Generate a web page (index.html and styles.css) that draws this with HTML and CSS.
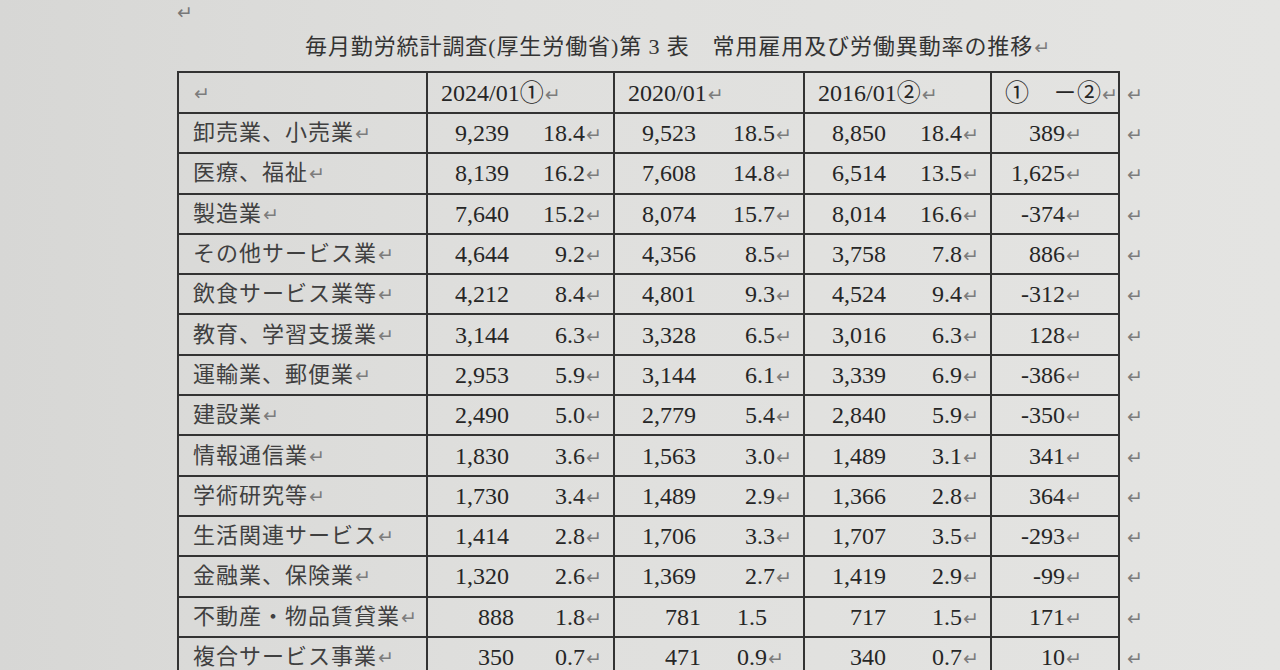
FILE: index.html
```html
<!DOCTYPE html>
<html lang="ja">
<head>
<meta charset="utf-8">
<title>毎月勤労統計調査 第3表</title>
<link rel="stylesheet" href="styles.css">
</head>
<body>
<div class="page">
  <div class="topmark">↵</div>
  <h1 class="title">毎月勤労統計調査(厚生労働省)第 3 表　常用雇用及び労働異動率の推移<i class="rm">↵</i></h1>
  <table class="stats">
    <colgroup>
      <col class="c-lab"><col class="c-24"><col class="c-20"><col class="c-16"><col class="c-diff"><col class="c-eol">
    </colgroup>
    <tr class="head">
      <td class="lab"><i class="rm">↵</i></td>
      <td class="hd">2024/01①<i class="rm">↵</i></td>
      <td class="hd">2020/01<i class="rm">↵</i></td>
      <td class="hd">2016/01②<i class="rm">↵</i></td>
      <td class="hd">①　－②<i class="rm">↵</i></td>
      <td class="eol"><i class="rm">↵</i></td>
    </tr>
    <tr>
      <td class="lab">卸売業、小売業<i class="rm">↵</i></td>
      <td><div class="pair"><span class="n">9,239</span><span class="p">18.4<i class="rm">↵</i></span></div></td>
      <td><div class="pair"><span class="n">9,523</span><span class="p">18.5<i class="rm">↵</i></span></div></td>
      <td><div class="pair"><span class="n">8,850</span><span class="p">18.4<i class="rm">↵</i></span></div></td>
      <td class="diff">389<i class="rm">↵</i></td>
      <td class="eol"><i class="rm">↵</i></td>
    </tr>
    <tr>
      <td class="lab">医療、福祉<i class="rm">↵</i></td>
      <td><div class="pair"><span class="n">8,139</span><span class="p">16.2<i class="rm">↵</i></span></div></td>
      <td><div class="pair"><span class="n">7,608</span><span class="p">14.8<i class="rm">↵</i></span></div></td>
      <td><div class="pair"><span class="n">6,514</span><span class="p">13.5<i class="rm">↵</i></span></div></td>
      <td class="diff">1,625<i class="rm">↵</i></td>
      <td class="eol"><i class="rm">↵</i></td>
    </tr>
    <tr>
      <td class="lab">製造業<i class="rm">↵</i></td>
      <td><div class="pair"><span class="n">7,640</span><span class="p">15.2<i class="rm">↵</i></span></div></td>
      <td><div class="pair"><span class="n">8,074</span><span class="p">15.7<i class="rm">↵</i></span></div></td>
      <td><div class="pair"><span class="n">8,014</span><span class="p">16.6<i class="rm">↵</i></span></div></td>
      <td class="diff">-374<i class="rm">↵</i></td>
      <td class="eol"><i class="rm">↵</i></td>
    </tr>
    <tr>
      <td class="lab">その他サービス業<i class="rm">↵</i></td>
      <td><div class="pair"><span class="n">4,644</span><span class="p">9.2<i class="rm">↵</i></span></div></td>
      <td><div class="pair"><span class="n">4,356</span><span class="p">8.5<i class="rm">↵</i></span></div></td>
      <td><div class="pair"><span class="n">3,758</span><span class="p">7.8<i class="rm">↵</i></span></div></td>
      <td class="diff">886<i class="rm">↵</i></td>
      <td class="eol"><i class="rm">↵</i></td>
    </tr>
    <tr>
      <td class="lab">飲食サービス業等<i class="rm">↵</i></td>
      <td><div class="pair"><span class="n">4,212</span><span class="p">8.4<i class="rm">↵</i></span></div></td>
      <td><div class="pair"><span class="n">4,801</span><span class="p">9.3<i class="rm">↵</i></span></div></td>
      <td><div class="pair"><span class="n">4,524</span><span class="p">9.4<i class="rm">↵</i></span></div></td>
      <td class="diff">-312<i class="rm">↵</i></td>
      <td class="eol"><i class="rm">↵</i></td>
    </tr>
    <tr>
      <td class="lab">教育、学習支援業<i class="rm">↵</i></td>
      <td><div class="pair"><span class="n">3,144</span><span class="p">6.3<i class="rm">↵</i></span></div></td>
      <td><div class="pair"><span class="n">3,328</span><span class="p">6.5<i class="rm">↵</i></span></div></td>
      <td><div class="pair"><span class="n">3,016</span><span class="p">6.3<i class="rm">↵</i></span></div></td>
      <td class="diff">128<i class="rm">↵</i></td>
      <td class="eol"><i class="rm">↵</i></td>
    </tr>
    <tr>
      <td class="lab">運輸業、郵便業<i class="rm">↵</i></td>
      <td><div class="pair"><span class="n">2,953</span><span class="p">5.9<i class="rm">↵</i></span></div></td>
      <td><div class="pair"><span class="n">3,144</span><span class="p">6.1<i class="rm">↵</i></span></div></td>
      <td><div class="pair"><span class="n">3,339</span><span class="p">6.9<i class="rm">↵</i></span></div></td>
      <td class="diff">-386<i class="rm">↵</i></td>
      <td class="eol"><i class="rm">↵</i></td>
    </tr>
    <tr>
      <td class="lab">建設業<i class="rm">↵</i></td>
      <td><div class="pair"><span class="n">2,490</span><span class="p">5.0<i class="rm">↵</i></span></div></td>
      <td><div class="pair"><span class="n">2,779</span><span class="p">5.4<i class="rm">↵</i></span></div></td>
      <td><div class="pair"><span class="n">2,840</span><span class="p">5.9<i class="rm">↵</i></span></div></td>
      <td class="diff">-350<i class="rm">↵</i></td>
      <td class="eol"><i class="rm">↵</i></td>
    </tr>
    <tr>
      <td class="lab">情報通信業<i class="rm">↵</i></td>
      <td><div class="pair"><span class="n">1,830</span><span class="p">3.6<i class="rm">↵</i></span></div></td>
      <td><div class="pair"><span class="n">1,563</span><span class="p">3.0<i class="rm">↵</i></span></div></td>
      <td><div class="pair"><span class="n">1,489</span><span class="p">3.1<i class="rm">↵</i></span></div></td>
      <td class="diff">341<i class="rm">↵</i></td>
      <td class="eol"><i class="rm">↵</i></td>
    </tr>
    <tr>
      <td class="lab">学術研究等<i class="rm">↵</i></td>
      <td><div class="pair"><span class="n">1,730</span><span class="p">3.4<i class="rm">↵</i></span></div></td>
      <td><div class="pair"><span class="n">1,489</span><span class="p">2.9<i class="rm">↵</i></span></div></td>
      <td><div class="pair"><span class="n">1,366</span><span class="p">2.8<i class="rm">↵</i></span></div></td>
      <td class="diff">364<i class="rm">↵</i></td>
      <td class="eol"><i class="rm">↵</i></td>
    </tr>
    <tr>
      <td class="lab">生活関連サービス<i class="rm">↵</i></td>
      <td><div class="pair"><span class="n">1,414</span><span class="p">2.8<i class="rm">↵</i></span></div></td>
      <td><div class="pair"><span class="n">1,706</span><span class="p">3.3<i class="rm">↵</i></span></div></td>
      <td><div class="pair"><span class="n">1,707</span><span class="p">3.5<i class="rm">↵</i></span></div></td>
      <td class="diff">-293<i class="rm">↵</i></td>
      <td class="eol"><i class="rm">↵</i></td>
    </tr>
    <tr>
      <td class="lab">金融業、保険業<i class="rm">↵</i></td>
      <td><div class="pair"><span class="n">1,320</span><span class="p">2.6<i class="rm">↵</i></span></div></td>
      <td><div class="pair"><span class="n">1,369</span><span class="p">2.7<i class="rm">↵</i></span></div></td>
      <td><div class="pair"><span class="n">1,419</span><span class="p">2.9<i class="rm">↵</i></span></div></td>
      <td class="diff">-99<i class="rm">↵</i></td>
      <td class="eol"><i class="rm">↵</i></td>
    </tr>
    <tr>
      <td class="lab">不動産・物品賃貸業<i class="rm">↵</i></td>
      <td><div class="pair"><span class="n wide">888</span><span class="p">1.8<i class="rm">↵</i></span></div></td>
      <td><div class="pair"><span class="n wide">781</span><span class="p left">1.5</span></div></td>
      <td><div class="pair"><span class="n">717</span><span class="p">1.5<i class="rm">↵</i></span></div></td>
      <td class="diff">171<i class="rm">↵</i></td>
      <td class="eol"><i class="rm">↵</i></td>
    </tr>
    <tr>
      <td class="lab">複合サービス事業<i class="rm">↵</i></td>
      <td><div class="pair"><span class="n wide">350</span><span class="p">0.7<i class="rm">↵</i></span></div></td>
      <td><div class="pair"><span class="n wide">471</span><span class="p left">0.9<i class="rm">↵</i></span></div></td>
      <td><div class="pair"><span class="n">340</span><span class="p">0.7<i class="rm">↵</i></span></div></td>
      <td class="diff">10<i class="rm">↵</i></td>
      <td class="eol"><i class="rm">↵</i></td>
    </tr>
  </table>
</div>
</body>
</html>
```

FILE: styles.css
```css
html, body {
  margin: 0;
  height: 670px;
  overflow: hidden;
}

body {
  background: linear-gradient(90deg, #d7d7d5 0%, #dfdfdd 40%, #e4e4e2 100%);
  font-family: "Liberation Serif", "Noto Sans CJK JP", serif;
  color: #262626;
}

.page {
  padding: 2px 0 0 177px;
}

.rm {
  font-style: normal;
  font-family: "DejaVu Sans", sans-serif;
  font-size: 19px;
  color: #7c7c7c;
  margin-left: 1px;
  letter-spacing: 0;
}

.topmark {
  height: 20px;
  line-height: 20px;
  font-family: "DejaVu Sans", sans-serif;
  font-size: 19px;
  color: #777;
}

.title {
  margin: 10px 0 0 128px;
  height: 30px;
  line-height: 30px;
  font-size: 22px;
  letter-spacing: 0.9px;
  font-weight: normal;
  white-space: nowrap;
  color: #333;
}

.stats {
  margin-top: 9px;
  border-collapse: collapse;
  table-layout: fixed;
  width: 971px;
}

.c-lab { width: 249px; }
.c-24 { width: 187px; }
.c-20 { width: 190px; }
.c-16 { width: 187px; }
.c-diff { width: 128px; }
.c-eol { width: 30px; }

.stats td {
  border: 2px solid #333;
  padding: 0;
  height: 38.3px;
  line-height: 1;
  font-size: 24px;
  white-space: nowrap;
  overflow: hidden;
}

.stats .head td {
  height: 39px;
}

.stats td.eol {
  border: none;
  padding-left: 6px;
}

.stats td.lab {
  padding-left: 14px;
  font-size: 22px;
  letter-spacing: 1px;
  color: #404040;
}

.stats td.hd {
  padding-left: 13px;
}

.pair {
  display: flex;
  align-items: baseline;
}

.n {
  width: 81px;
  text-align: right;
}

.n.wide {
  width: 86px;
}

.p {
  flex: 1;
  text-align: right;
  padding-right: 11px;
}

.p.left {
  text-align: left;
  padding-left: 36px;
  padding-right: 0;
}

.stats td.diff {
  text-align: right;
  padding-right: 36px;
}
```
